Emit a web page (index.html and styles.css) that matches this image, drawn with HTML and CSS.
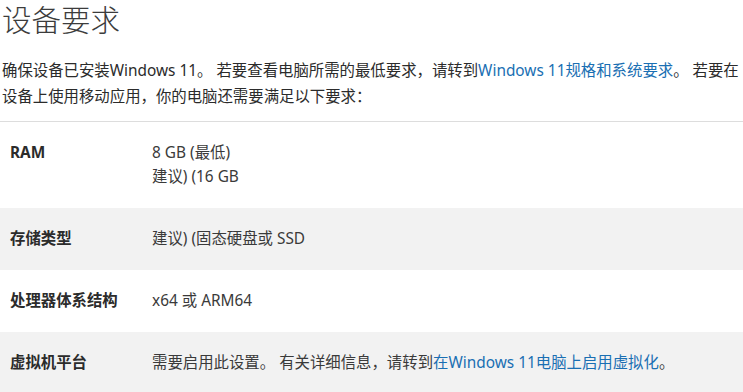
FILE: index.html
```html
<!DOCTYPE html>
<html lang="zh-CN">
<head>
<meta charset="utf-8">
<link rel="stylesheet" href="styles.css">
</head>
<body>
<main class="page">
  <h1 class="title">设备要求</h1>
  <p class="intro">确保设备已安装Windows 11。 若要查看电脑所需的最低要求，请转到<a class="link" href="#">Windows 11规格和系统要求</a>。 若要在设备上使用移动应用，你的电脑还需要满足以下要求：</p>
  <table class="reqs">
    <tr class="row">
      <th class="label">RAM</th>
      <td class="value">8 GB (最低)<br>建议) (16 GB</td>
    </tr>
    <tr class="row alt">
      <th class="label">存储类型</th>
      <td class="value">建议) (固态硬盘或 SSD</td>
    </tr>
    <tr class="row">
      <th class="label">处理器体系结构</th>
      <td class="value">x64 或 ARM64</td>
    </tr>
    <tr class="row alt">
      <th class="label">虚拟机平台</th>
      <td class="value">需要启用此设置。 有关详细信息，请转到<a class="link" href="#">在Windows 11电脑上启用虚拟化</a>。</td>
    </tr>
  </table>
</main>
</body>
</html>
```

FILE: styles.css
```css
html, body {
  margin: 0;
  padding: 0;
  background: #ffffff;
}
body {
  font-family: "Noto Sans", "Noto Sans CJK SC", sans-serif;
  color: #2b2b2b;
}
.page {
  padding: 0 0 0 2px;
}
.title {
  margin: 0;
  padding-top: 1px;
  font-size: 29.5px;
  line-height: 38px;
  font-weight: 300;
  color: #3c3c3c;
}
.intro {
  margin: 19px 0 0 0;
  font-size: 15.4px;
  line-height: 26px;
  color: #2b2b2b;
}
.link {
  color: #1a6fb3;
  text-decoration: none;
}
.reqs {
  margin-top: 11px;
  margin-left: -2px;
  width: 743px;
  border-collapse: collapse;
  border-top: 1px solid #dddddd;
}
.row.alt {
  background: #f2f2f2;
}
.label {
  width: 132px;
  text-align: left;
  vertical-align: top;
  padding: 19px 10px;
  font-size: 15.4px;
  line-height: 24px;
  font-weight: 700;
  color: #2b2b2b;
}
.value {
  vertical-align: top;
  padding: 19px 0;
  font-size: 15.4px;
  line-height: 24px;
  color: #3a3a3a;
}
```
